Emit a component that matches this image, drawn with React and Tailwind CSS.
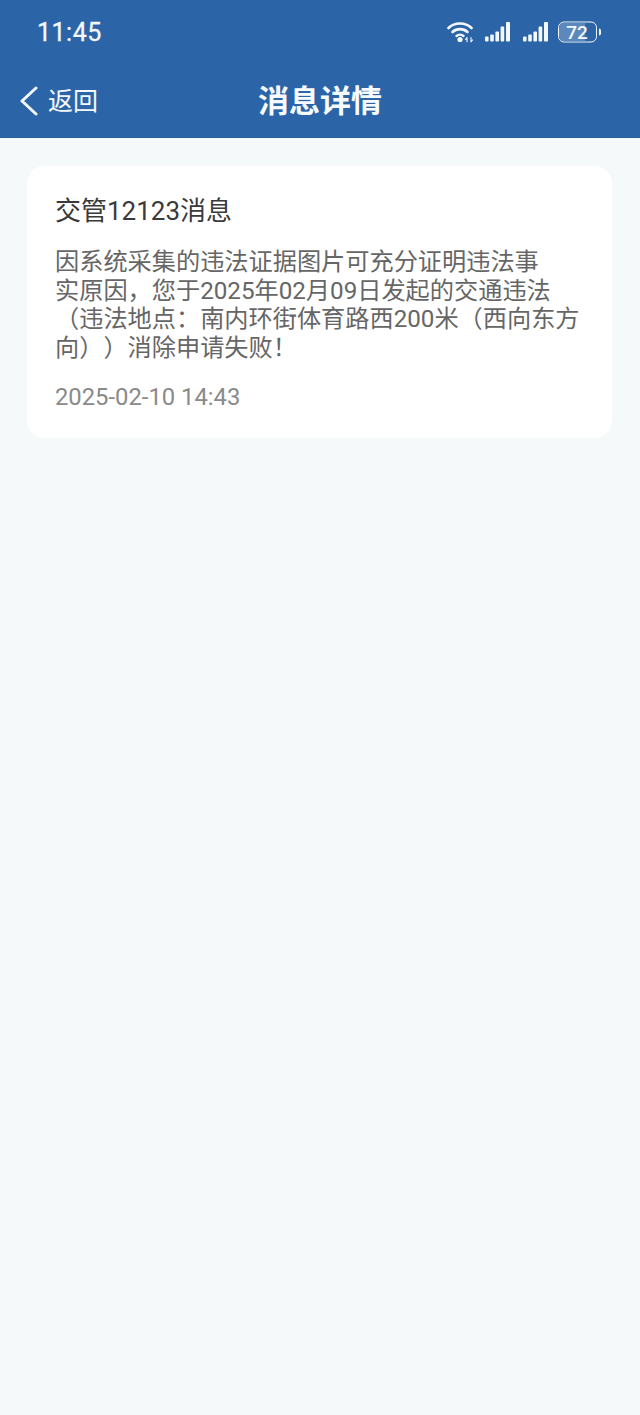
import React from "react";

const font = { fontFamily: 'Roboto, "Noto Sans CJK SC", sans-serif' };

function Signal() {
  return (
    <svg width="26" height="21" viewBox="0 0 26 21" fill="#f4f8fc">
      <rect x="0" y="15" width="3.6" height="5" rx="1" />
      <rect x="5.2" y="13" width="3.6" height="7" rx="1" />
      <rect x="10.4" y="10" width="3.6" height="10" rx="1" />
      <rect x="15.6" y="5" width="3.6" height="15" rx="1" />
      <rect x="21" y="0.5" width="4" height="19.5" rx="1" />
    </svg>
  );
}

export default function App() {
  return (
    <div className="w-[640px] h-[1415px] bg-[#f5f9fa]" style={font}>
      <header className="h-[138px] bg-[#2b65a8] text-white flex flex-col border-b border-[#2a5f9c]">
        <div className="h-[64px] pl-[37px] pr-[39px] flex items-center justify-between">
          <span className="text-[25px] leading-none tracking-[0.5px] [-webkit-text-stroke:0.3px_#f4f8fc] text-[#f4f8fc]">11:45</span>
          <div className="flex items-center gap-[11px] translate-y-[-0.5px]">
            <svg width="27" height="21" viewBox="0 0 27 21" fill="none" stroke="#f4f8fc" strokeLinecap="round">
              <path d="M1.5 6.5C7.5 .5 18.5 .5 24.5 6.5" strokeWidth="2.6" />
              <path d="M5.5 10.5C9.5 6.6 16.5 6.6 20.5 10.5" strokeWidth="2.6" />
              <path d="M9.5 14.5C11.5 12.8 14.5 12.8 16.5 14.5" strokeWidth="2.4" />
              <circle cx="13" cy="18" r="2.6" fill="#f4f8fc" stroke="none" />
              <path d="M20 16v4.5M24 16v4.5M18.5 18l1.5-2M25.5 18.5l-1.5 2" strokeWidth="1.1" />
            </svg>
            <Signal />
            <div className="ml-[1px]"><Signal /></div>
            <div className="flex items-center gap-[2px] -ml-[2px]">
              <div className="relative w-[39px] h-[21px] rounded-[6px] border-[1.5px] border-[#f4f8fc] overflow-hidden flex items-center justify-center text-[19px] leading-none font-medium text-[#f4f8fc]">
                <div className="absolute left-0 top-0 bottom-0 w-[72%] bg-[#5c88bc]" />
                <span className="relative">72</span>
              </div>
              <div className="w-[2.5px] h-[7px] rounded-r-[2px] bg-[#f4f8fc]" />
            </div>
          </div>
        </div>
        <div className="relative flex-1 flex items-center justify-center pt-[1px]">
          <div className="absolute left-[19px] top-[22px] flex items-center gap-[9px]">
            <svg width="20" height="30" viewBox="0 0 20 30" fill="none" stroke="#f4f8fc" strokeWidth="3" strokeLinecap="round" strokeLinejoin="round">
              <path d="M17 2L3 15L17 28" />
            </svg>
            <span className="text-[25px] leading-none text-[#f4f8fc]">返回</span>
          </div>
          <h1 className="text-[31px] leading-none font-bold text-[#f8fbfe]">消息详情</h1>
        </div>
      </header>
      <main className="pt-[28px] pl-[27px] pr-[28px]">
        <div className="h-[272px] bg-white rounded-[18px] pl-[28px] pr-[28px] pt-[29px]">
          <h2 className="text-[26px] leading-[32px] text-[#3a3a3a] font-normal">交管12123消息</h2>
          <p className="mt-[21px] text-[24.2px] leading-[28.5px] text-[#666666] whitespace-nowrap [text-spacing-trim:space-all]">
            因系统采集的违法证据图片可充分证明违法事
            <br />
            实原因，您于2025年02月09日发起的交通违法
            <br />
            （违法地点：南内环街体育路西200米（西向东方
            <br />
            向））消除申请失败！
          </p>
          <p className="mt-[21px] text-[23.8px] leading-[28px] text-[#8a8a8a]">2025-02-10 14:43</p>
        </div>
      </main>
    </div>
  );
}
